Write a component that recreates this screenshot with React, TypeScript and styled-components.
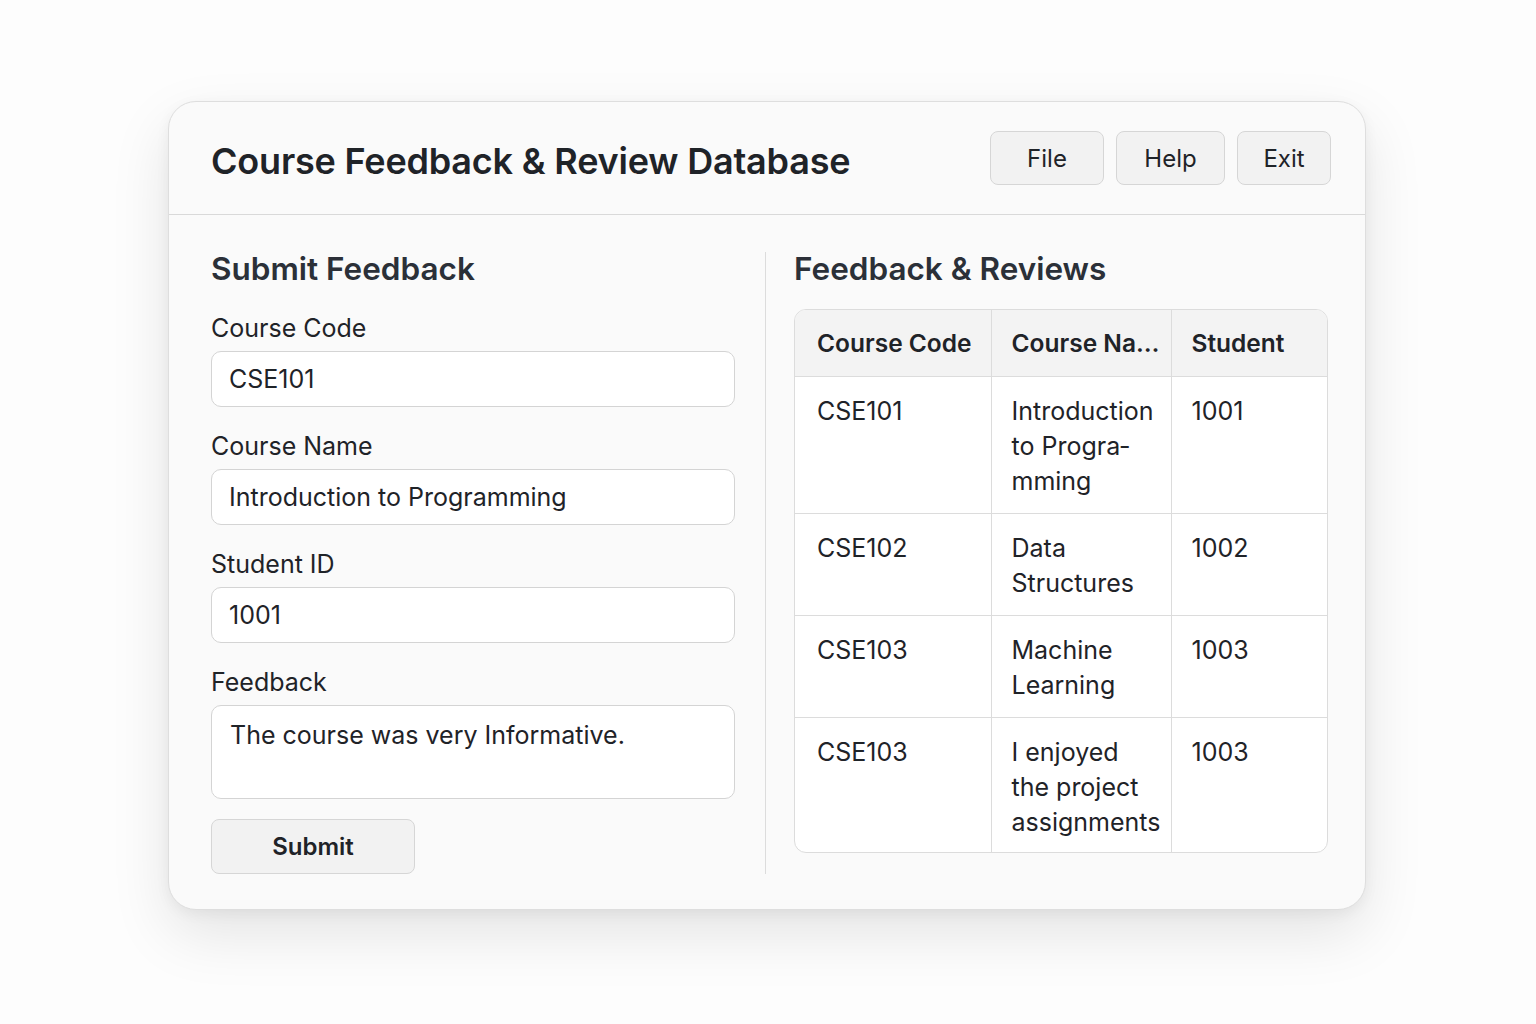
import React from 'react'
import styled, { createGlobalStyle } from 'styled-components'

const GlobalStyle = createGlobalStyle`
  html, body {
    margin: 0;
    padding: 0;
    background: #fdfdfd;
    font-family: Inter, "Noto Sans", "Liberation Sans", sans-serif;
    color: #1f2328;
  }
`

const Page = styled.div`
  width: 1536px;
  height: 1024px;
  padding: 101px 0 0 168px;
  box-sizing: border-box;
  display: flex;
  align-items: flex-start;
`

const Card = styled.div`
  width: 1198px;
  height: 809px;
  box-sizing: border-box;
  background: #fafafa;
  border: 1px solid #dedede;
  border-radius: 28px;
  box-shadow: 0 24px 60px rgba(0, 0, 0, 0.10), 0 4px 14px rgba(0, 0, 0, 0.05);
  display: flex;
  flex-direction: column;
  overflow: hidden;
`

const Header = styled.header`
  height: 113px;
  flex-shrink: 0;
  box-sizing: border-box;
  padding: 0 34px 0 42px;
  border-bottom: 1px solid #d9d9d9;
  display: flex;
  align-items: center;
  justify-content: space-between;
`

const Title = styled.h1`
  margin: 6px 0 0;
  font-size: 36px;
  font-weight: 600;
  letter-spacing: -0.2px;
  color: #1f2328;
`

const MenuBar = styled.nav`
  display: flex;
  gap: 12px;
`

const MenuButton = styled.button<{ w: number }>`
  width: ${p => p.w}px;
  height: 54px;
  background: #f2f2f2;
  border: 1px solid #d6d6d6;
  border-radius: 8px;
  font-family: inherit;
  font-size: 24px;
  color: #1f2328;
  cursor: pointer;
`

const Body = styled.div`
  flex: 1;
  display: grid;
  grid-template-columns: 555px 1fr;
  padding: 37px 39px 36px 42px;
`

const FormColumn = styled.section`
  padding-right: 30px;
  border-right: 1px solid #dcdcdc;
  display: flex;
  flex-direction: column;
`

const ListColumn = styled.section`
  padding-left: 28px;
  display: flex;
  flex-direction: column;
`

const SectionTitle = styled.h2`
  margin: 0;
  font-size: 31.5px;
  line-height: 34px;
  font-weight: 600;
  color: #2b3038;
`

const Field = styled.div`
  display: flex;
  flex-direction: column;
  gap: 8px;
  margin-top: 24px;

  &:first-of-type {
    margin-top: 27px;
  }
`

const Label = styled.label`
  font-size: 25px;
  line-height: 30px;
  color: #1f2328;
`

const TextInput = styled.input`
  height: 56px;
  box-sizing: border-box;
  width: 100%;
  padding: 0 17px;
  background: #fff;
  border: 1px solid #d4d4d4;
  border-radius: 10px;
  font-family: inherit;
  font-size: 25px;
  color: #1f2328;
  outline: none;
`

const TextArea = styled.textarea`
  height: 94px;
  box-sizing: border-box;
  width: 100%;
  padding: 14px 18px;
  background: #fff;
  border: 1px solid #d4d4d4;
  border-radius: 10px;
  font-family: inherit;
  font-size: 25px;
  line-height: 30px;
  color: #1f2328;
  resize: none;
  outline: none;
`

const SubmitButton = styled.button`
  margin-top: 20px;
  width: 204px;
  height: 55px;
  background: #f2f2f2;
  border: 1px solid #d6d6d6;
  border-radius: 8px;
  font-family: inherit;
  font-size: 24px;
  font-weight: 600;
  color: #1f2328;
`

const TableWrap = styled.div`
  margin-top: 23px;
  width: 532px;
  border: 1px solid #dcdcdc;
  border-radius: 12px;
  overflow: hidden;
  background: #fff;
`

const Table = styled.table`
  width: 100%;
  border-collapse: collapse;
  table-layout: fixed;
  font-size: 25px;
  line-height: 35px;
`

const Th = styled.th`
  background: #f3f3f3;
  text-align: left;
  font-weight: 600;
  font-size: 24.5px;
  padding: 16px 3px 15px 20px;
  white-space: nowrap;
  overflow: hidden;
  text-overflow: ellipsis;
  border-right: 1px solid #dcdcdc;
  border-bottom: 1px solid #dcdcdc;
  color: #1f2328;

  &:first-child {
    padding-left: 22px;
  }
  &:last-child {
    border-right: none;
  }
`

const Td = styled.td`
  vertical-align: top;
  padding: 17px 9px 14px 20px;
  border-right: 1px solid #dcdcdc;
  border-bottom: 1px solid #dcdcdc;
  color: #1f2328;
  hyphens: manual;

  tr:last-child & {
    border-bottom: none;
    padding-bottom: 12px;
  }
  &:first-child {
    padding-left: 22px;
  }
  &:last-child {
    border-right: none;
  }
`

const rows = [
  { code: 'CSE101', name: 'Introduction to Progra\u00ADmming', student: '1001' },
  { code: 'CSE102', name: 'Data Structures', student: '1002' },
  { code: 'CSE103', name: 'Machine Learning', student: '1003' },
  { code: 'CSE103', name: 'I enjoyed the project assignments', student: '1003' },
]

const App = () => {
  return (
    <>
      <GlobalStyle />
      <Page>
        <Card>
          <Header>
            <Title>Course Feedback &amp; Review Database</Title>
            <MenuBar>
              <MenuButton w={114}>File</MenuButton>
              <MenuButton w={109}>Help</MenuButton>
              <MenuButton w={94}>Exit</MenuButton>
            </MenuBar>
          </Header>
          <Body>
            <FormColumn>
              <SectionTitle>Submit Feedback</SectionTitle>
              <Field>
                <Label>Course Code</Label>
                <TextInput defaultValue="CSE101" />
              </Field>
              <Field>
                <Label>Course Name</Label>
                <TextInput defaultValue="Introduction to Programming" />
              </Field>
              <Field>
                <Label>Student ID</Label>
                <TextInput defaultValue="1001" />
              </Field>
              <Field>
                <Label>Feedback</Label>
                <TextArea defaultValue="The course was very Informative." />
              </Field>
              <div>
                <SubmitButton>Submit</SubmitButton>
              </div>
            </FormColumn>
            <ListColumn>
              <SectionTitle>Feedback &amp; Reviews</SectionTitle>
              <TableWrap>
                <Table>
                  <colgroup>
                    <col style={{ width: 196 }} />
                    <col style={{ width: 180 }} />
                    <col style={{ width: 156 }} />
                  </colgroup>
                  <thead>
                    <tr>
                      <Th>Course Code</Th>
                      <Th>Course Name</Th>
                      <Th>Student</Th>
                    </tr>
                  </thead>
                  <tbody>
                    {rows.map((r, i) => (
                      <tr key={i}>
                        <Td>{r.code}</Td>
                        <Td>{r.name}</Td>
                        <Td>{r.student}</Td>
                      </tr>
                    ))}
                  </tbody>
                </Table>
              </TableWrap>
            </ListColumn>
          </Body>
        </Card>
      </Page>
    </>
  )
}

export default App
